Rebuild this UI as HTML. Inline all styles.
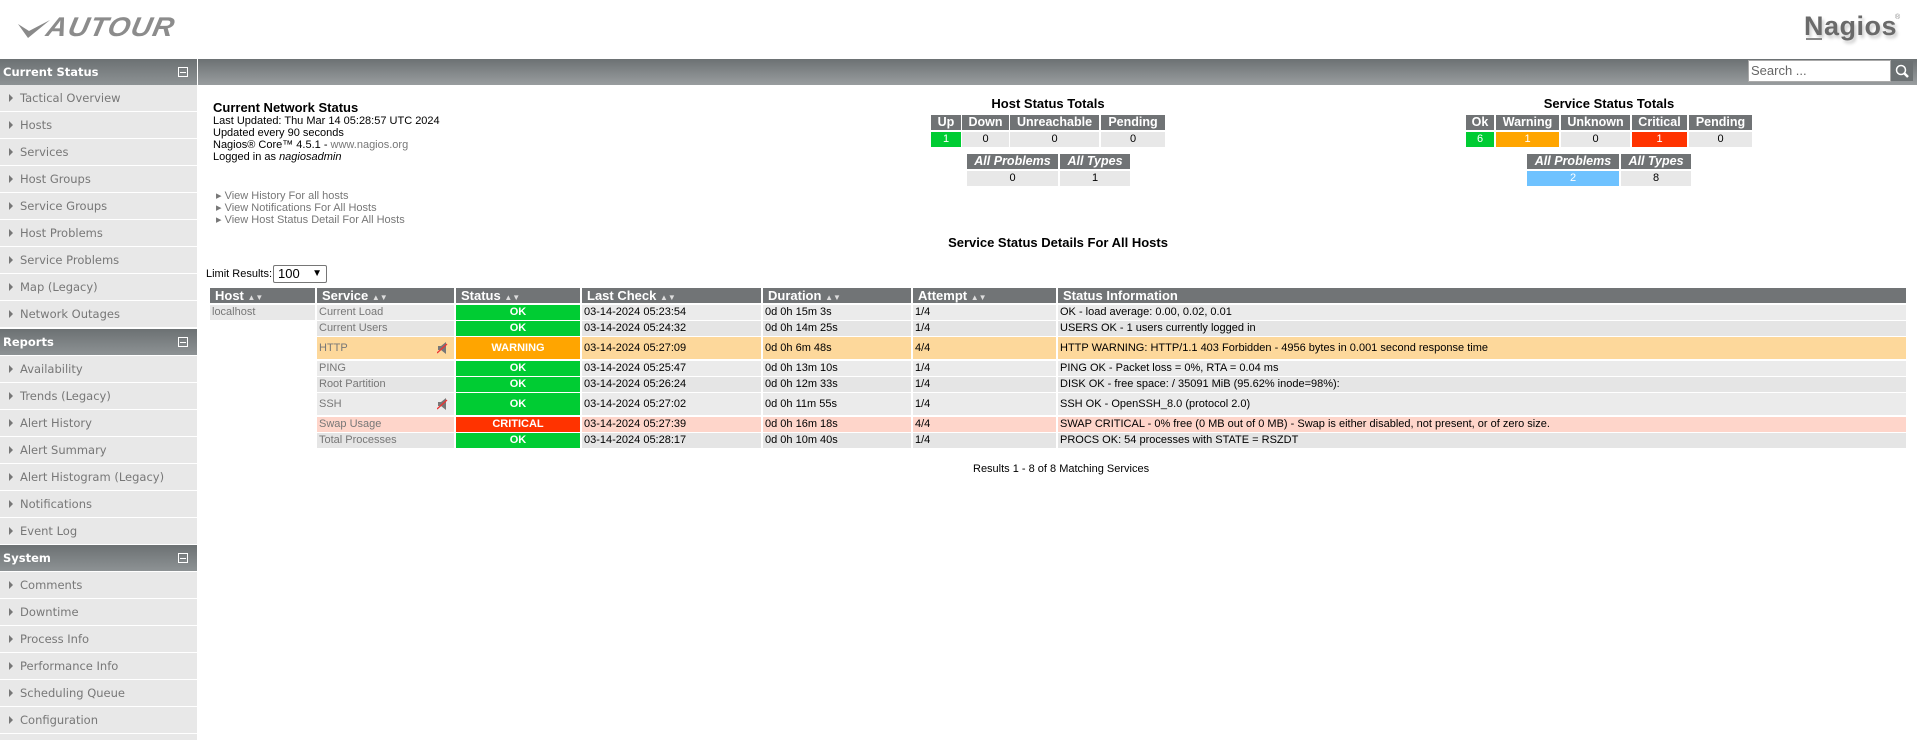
<!DOCTYPE html>
<html><head><meta charset="utf-8"><style>
*{margin:0;padding:0;box-sizing:border-box}
html{overflow:hidden;width:1917px;height:740px}
body{width:1917px;height:740px;position:relative;background:#fff;font-family:"Liberation Sans",Arial,sans-serif;font-size:11px;color:#000;overflow:hidden}
.a{position:absolute}
.sh{position:absolute;left:0;width:197px;height:26px;background:linear-gradient(#6c7173,#8d9294);color:#fff;font-family:"DejaVu Sans",sans-serif;font-weight:bold;font-size:11.5px;line-height:26px;padding-left:3px}
.sh i{position:absolute;right:9px;top:8px;width:10px;height:10px;border:1px solid #fff;font-style:normal}
.sh i:after{content:"";position:absolute;left:1px;top:3.5px;width:6px;height:1px;background:#fff}
.si{position:absolute;left:0;width:197px;height:26px;background:#e8e8e8;color:#777;font-family:"DejaVu Sans",sans-serif;font-size:11.5px;line-height:26px;padding-left:20px}
.si:before{content:"";position:absolute;left:9px;top:9px;border-left:4px solid #777;border-top:4px solid transparent;border-bottom:4px solid transparent}
.si.e:before{display:none}
.c{position:absolute;text-align:center;font-size:11px;line-height:15px;height:15px}
.hd{background:#707375;color:#fff;font-weight:bold;font-size:12.5px}
.v{background:#e8e8e8;color:#000}
.it{font-style:italic}
.th{position:absolute;top:288px;height:15px;background:#717476;color:#fff;font-weight:bold;font-size:13px;line-height:15px;padding-left:5px}
.th small{font-size:8px;color:#ddd}
.td{position:absolute;font-size:11px;padding-left:2px;white-space:nowrap}
.st{position:absolute;left:456px;width:124px;color:#fff;font-weight:bold;text-align:center;font-size:11px}
</style></head><body>
<!-- logos -->
<svg class="a" style="left:16px;top:12px" width="165" height="30" viewBox="0 0 165 30">
<path d="M2 12 L12 26 L34 8 L13 19 Z" fill="#8a8a8a"/>
<text x="30" y="24" font-family="Liberation Sans" font-weight="bold" font-style="italic" font-size="27" fill="#8c8c8c" letter-spacing="1" textLength="128" lengthAdjust="spacingAndGlyphs" transform="skewX(-12) translate(4,0)">AUTOUR</text>
</svg>
<div class="a" style="left:1804px;top:11px;font-family:'Liberation Sans',sans-serif;font-weight:bold;font-size:27px;color:#6a6a6a;text-shadow:2px 3px 3px #ccc;letter-spacing:0.5px">Nagios</div>
<div class="a" style="left:1895px;top:14px;font-size:7px;color:#888">®</div>
<div class="a" style="left:1806px;top:38px;width:16px;height:2px;background:#888"></div>
<!-- top bar -->
<div class="a" style="left:198px;top:59px;width:1719px;height:26px;background:linear-gradient(#6c7173,#999d9f)"></div>
<div class="a" style="left:1748px;top:60px;width:143px;height:22px;background:#fff;border:1px solid #aaa;color:#666;font-size:13px;line-height:20px;padding-left:2px">Search ...</div>
<div class="a" style="left:1891px;top:61px;width:22px;height:20px;background:#6c7173"></div>
<svg class="a" style="left:1894px;top:63px" width="16" height="16"><circle cx="7" cy="7" r="4.5" stroke="#fff" stroke-width="1.5" fill="none"/><path d="M10 10 L14 14" stroke="#fff" stroke-width="2.5"/></svg>
<!-- sidebar -->
<div class="sh" style="top:59px">Current Status<i></i></div>
<div class="si" style="top:85px">Tactical Overview</div>
<div class="si" style="top:112px">Hosts</div>
<div class="si" style="top:139px">Services</div>
<div class="si" style="top:166px">Host Groups</div>
<div class="si" style="top:193px">Service Groups</div>
<div class="si" style="top:220px">Host Problems</div>
<div class="si" style="top:247px">Service Problems</div>
<div class="si" style="top:274px">Map (Legacy)</div>
<div class="si" style="top:301px">Network Outages</div>
<div class="sh" style="top:329px">Reports<i></i></div>
<div class="si" style="top:356px">Availability</div>
<div class="si" style="top:383px">Trends (Legacy)</div>
<div class="si" style="top:410px">Alert History</div>
<div class="si" style="top:437px">Alert Summary</div>
<div class="si" style="top:464px">Alert Histogram (Legacy)</div>
<div class="si" style="top:491px">Notifications</div>
<div class="si" style="top:518px">Event Log</div>
<div class="sh" style="top:545px">System<i></i></div>
<div class="si" style="top:572px">Comments</div>
<div class="si" style="top:599px">Downtime</div>
<div class="si" style="top:626px">Process Info</div>
<div class="si" style="top:653px">Performance Info</div>
<div class="si" style="top:680px">Scheduling Queue</div>
<div class="si" style="top:707px">Configuration</div>
<div class="si e" style="top:734px;height:6px"></div>
<!-- info -->
<div class="a" style="left:213px;top:100px;font-weight:bold;font-size:13px">Current Network Status</div>
<div class="a" style="left:213px;top:115px;font-size:11px;line-height:12px">Last Updated: Thu Mar 14 05:28:57 UTC 2024<br>Updated every 90 seconds<br>Nagios® Core™ 4.5.1 - <span style="color:#777">www.nagios.org</span><br>Logged in as <i>nagiosadmin</i></div>
<div class="a" style="left:216px;top:190px;font-size:11px;line-height:12px;color:#777">
<div>▸ View History For all hosts</div><div>▸ View Notifications For All Hosts</div><div>▸ View Host Status Detail For All Hosts</div></div>
<!-- host totals -->
<div class="a" style="left:948px;top:96px;width:200px;text-align:center;font-weight:bold;font-size:13px">Host Status Totals</div>
<div class="c hd" style="left:931px;top:115px;width:30px">Up</div>
<div class="c hd" style="left:962px;top:115px;width:47px">Down</div>
<div class="c hd" style="left:1010px;top:115px;width:89px">Unreachable</div>
<div class="c hd" style="left:1101px;top:115px;width:64px">Pending</div>
<div class="c" style="left:931px;top:132px;width:30px;background:#00cc33;color:#fff">1</div>
<div class="c v" style="left:962px;top:132px;width:47px">0</div>
<div class="c v" style="left:1010px;top:132px;width:89px">0</div>
<div class="c v" style="left:1101px;top:132px;width:64px">0</div>
<div class="c hd it" style="left:967px;top:154px;width:91px">All Problems</div>
<div class="c hd it" style="left:1060px;top:154px;width:70px">All Types</div>
<div class="c v" style="left:967px;top:171px;width:91px">0</div>
<div class="c v" style="left:1060px;top:171px;width:70px">1</div>
<!-- service totals -->
<div class="a" style="left:1509px;top:96px;width:200px;text-align:center;font-weight:bold;font-size:13px">Service Status Totals</div>
<div class="c hd" style="left:1466px;top:115px;width:28px">Ok</div>
<div class="c hd" style="left:1496px;top:115px;width:63px">Warning</div>
<div class="c hd" style="left:1561px;top:115px;width:69px">Unknown</div>
<div class="c hd" style="left:1632px;top:115px;width:55px">Critical</div>
<div class="c hd" style="left:1689px;top:115px;width:63px">Pending</div>
<div class="c" style="left:1466px;top:132px;width:28px;background:#00cc33;color:#fff">6</div>
<div class="c" style="left:1496px;top:132px;width:63px;background:#ffa500;color:#fff">1</div>
<div class="c v" style="left:1561px;top:132px;width:69px">0</div>
<div class="c" style="left:1632px;top:132px;width:55px;background:#ff3300;color:#fff">1</div>
<div class="c v" style="left:1689px;top:132px;width:63px">0</div>
<div class="c hd it" style="left:1527px;top:154px;width:92px">All Problems</div>
<div class="c hd it" style="left:1621px;top:154px;width:70px">All Types</div>
<div class="c" style="left:1527px;top:171px;width:92px;background:#6ec2ff;color:#fff">2</div>
<div class="c v" style="left:1621px;top:171px;width:70px">8</div>
<!-- details -->
<div class="a" style="left:858px;top:235px;width:400px;text-align:center;font-weight:bold;font-size:13px">Service Status Details For All Hosts</div>
<div class="a" style="left:206px;top:268px;font-size:11px">Limit Results:</div>
<div class="a" style="left:273px;top:265px;width:54px;height:18px;border:1px solid #767676;border-radius:2px;font-size:13px;line-height:16px;padding-left:4px">100<span style="position:absolute;right:4px;top:0;font-size:10px">▼</span></div>
<div class="th" style="left:210px;width:105px">Host <small>▲▼</small></div>
<div class="th" style="left:317px;width:137px">Service <small>▲▼</small></div>
<div class="th" style="left:456px;width:124px">Status <small>▲▼</small></div>
<div class="th" style="left:582px;width:179px">Last Check <small>▲▼</small></div>
<div class="th" style="left:763px;width:148px">Duration <small>▲▼</small></div>
<div class="th" style="left:913px;width:143px">Attempt <small>▲▼</small></div>
<div class="th" style="left:1058px;width:848px">Status Information</div>
<div class="td" style="left:210px;top:305px;width:105px;height:15px;line-height:15px;background:#e8e8e8;color:#777">localhost</div>
<div id="rows"></div>
<div class="a" style="left:973px;top:463px;font-size:11px">Results 1 - 8 of 8 Matching Services</div>
<script>
var R=[[305,15,'#ebebeb','Current Load','#00cc33','OK','03-14-2024 05:23:54','0d 0h 15m 3s','1/4','OK - load average: 0.00, 0.02, 0.01'],
[321,15,'#e5e5e5','Current Users','#00cc33','OK','03-14-2024 05:24:32','0d 0h 14m 25s','1/4','USERS OK - 1 users currently logged in'],
[337,22,'#fdd89b','HTTP','#ffa500','WARNING','03-14-2024 05:27:09','0d 0h 6m 48s','4/4','HTTP WARNING: HTTP/1.1 403 Forbidden - 4956 bytes in 0.001 second response time',1],
[361,15,'#ebebeb','PING','#00cc33','OK','03-14-2024 05:25:47','0d 0h 13m 10s','1/4','PING OK - Packet loss = 0%, RTA = 0.04 ms'],
[377,15,'#e5e5e5','Root Partition','#00cc33','OK','03-14-2024 05:26:24','0d 0h 12m 33s','1/4','DISK OK - free space: / 35091 MiB (95.62% inode=98%):'],
[393,22,'#ebebeb','SSH','#00cc33','OK','03-14-2024 05:27:02','0d 0h 11m 55s','1/4','SSH OK - OpenSSH_8.0 (protocol 2.0)',1],
[417,15,'#fed5ca','Swap Usage','#ff3300','CRITICAL','03-14-2024 05:27:39','0d 0h 16m 18s','4/4','SWAP CRITICAL - 0% free (0 MB out of 0 MB) - Swap is either disabled, not present, or of zero size.'],
[433,15,'#e5e5e5','Total Processes','#00cc33','OK','03-14-2024 05:28:17','0d 0h 10m 40s','1/4','PROCS OK: 54 processes with STATE = RSZDT']];
var h='';
R.forEach(function(r){
var s='top:'+r[0]+'px;height:'+r[1]+'px;line-height:'+r[1]+'px;';
h+='<div class="td" style="'+s+'left:317px;width:137px;background:'+r[2]+';color:#777">'+r[3]+'</div>';
if(r[10])h+='<svg class="a" style="left:437px;top:'+(r[0]+(r[1]-12)/2)+'px" width="11" height="12"><path d="M1 4 H4 L9 0 V12 L4 8 H1 Z" fill="#777"/><path d="M0 11 L10 2" stroke="#e33" stroke-width="1.3"/></svg>';
h+='<div class="st" style="'+s+'background:'+r[4]+'">'+r[5]+'</div>';
h+='<div class="td" style="'+s+'left:582px;width:179px;background:'+r[2]+'">'+r[6]+'</div>';
h+='<div class="td" style="'+s+'left:763px;width:148px;background:'+r[2]+'">'+r[7]+'</div>';
h+='<div class="td" style="'+s+'left:913px;width:143px;background:'+r[2]+'">'+r[8]+'</div>';
h+='<div class="td" style="'+s+'left:1058px;width:848px;background:'+r[2]+'">'+r[9]+'</div>';
});
document.getElementById('rows').innerHTML=h;
</script>
</body></html>
